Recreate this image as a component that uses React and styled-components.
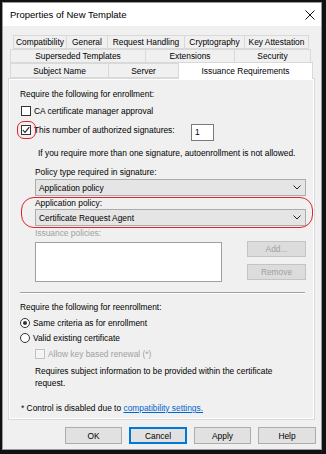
import React from 'react'
import styled, { createGlobalStyle } from 'styled-components'

const GlobalStyle = createGlobalStyle`
  html, body { margin: 0; padding: 0; background: #f0f0f0; }
  body {
    font-family: "Liberation Sans", Arial, sans-serif;
    font-size: 8.4px;
    color: #000;
  }
  * { box-sizing: border-box; }
`

const Window = styled.div`
  width: 326px;
  height: 454px;
  border-style: solid;
  border-color: #111;
  border-width: 2px 4px 4px 2px;
  display: flex;
  flex-direction: column;
`

const Frame = styled.div`
  flex: 1;
  border: 1px solid #9a9a9a;
  display: flex;
  flex-direction: column;
  background: #f0f0f0;
`

const TitleBar = styled.div`
  height: 23px;
  flex: 0 0 23px;
  background: #fff;
  display: flex;
  align-items: center;
  justify-content: space-between;
  padding: 0 6px 0 7px;
`

const Title = styled.span`
  font-size: 9.5px;
  color: #000;
`

const Body = styled.div`
  flex: 1;
  padding: 9px 6px 5px 5px;
  display: flex;
  flex-direction: column;
`

const TabRow = styled.div`
  display: flex;
  height: ${p => p.$h}px;
  margin-left: ${p => p.$ml}px;
  align-items: flex-start;
`

const Tab = styled.div`
  width: ${p => p.$w}px;
  height: ${p => (p.$active ? p.$h + 2 : p.$h)}px;
  margin-top: ${p => (p.$active ? -1 : 0)}px;
  margin-right: -1px;
  border: 1px solid #d9d9d9;
  border-bottom: ${p => (p.$active ? 'none' : '1px solid #d9d9d9')};
  background: ${p => (p.$active ? '#fff' : '#f0f0f0')};
  display: flex;
  align-items: center;
  justify-content: center;
  white-space: nowrap;
  position: relative;
  z-index: ${p => (p.$active ? 2 : 1)};
`

const Panel = styled.div`
  height: 342px;
  border: 1px solid #d9d9d9;
  box-shadow: inset 1px 1px 0 #fff, inset -1px -1px 0 #fff;
  padding: 0 8px 0 11px;
  display: flex;
  flex-direction: column;
`

const Line = styled.div`
  height: 12px;
  line-height: 12px;
  margin-top: ${p => p.$mt || 0}px;
  padding-left: ${p => p.$indent || 0}px;
  color: ${p => (p.$disabled ? '#a0a0a0' : '#000')};
  white-space: nowrap;
`

const Para = styled.div`
  line-height: 12px;
  margin-top: ${p => p.$mt || 0}px;
  padding-left: ${p => p.$indent || 0}px;
`

const CheckRow = styled.div`
  display: flex;
  align-items: center;
  height: 14px;
  margin-top: ${p => p.$mt || 0}px;
  padding-left: ${p => p.$indent || 0}px;
  color: ${p => (p.$disabled ? '#a0a0a0' : '#000')};
  white-space: nowrap;
`

const Box = styled.span`
  position: relative;
  width: 10px;
  height: 10px;
  margin: 0 3px 0 1px;
  border: 1px solid ${p => (p.$disabled ? '#c2c2c2' : '#333')};
  background: ${p => (p.$disabled ? '#f4f4f4' : '#fff')};
  display: flex;
  align-items: center;
  justify-content: center;
`

const RedRing = styled.span`
  position: absolute;
  left: -5px;
  top: -5px;
  width: 19px;
  height: 18px;
  border: 1.6px solid #e3202c;
  border-radius: 7px;
`

const Radio = styled.span`
  width: 10px;
  height: 10px;
  margin: 0 3px 0 0;
  border: 1px solid #333;
  border-radius: 50%;
  background: #fff;
  display: flex;
  align-items: center;
  justify-content: center;
  &::after {
    content: '';
    width: 4px;
    height: 4px;
    border-radius: 50%;
    background: ${p => (p.$on ? '#333' : 'transparent')};
  }
`

const SigRow = styled.div`
  display: flex;
  align-items: flex-start;
  height: 18px;
  margin-top: 5px;
`

const SigLabel = styled(CheckRow)`
  flex: 0 0 171px;
`

const NumberInput = styled.div`
  width: 23px;
  height: 17px;
  margin-top: 1px;
  border: 1px solid #7a7a7a;
  background: #fff;
  padding-left: 3px;
  line-height: 15px;
`

const Select = styled.div`
  height: 17px;
  margin-top: ${p => p.$mt || 0}px;
  margin-left: 15px;
  border: 1px solid #acacac;
  background: #e5e5e5;
  display: flex;
  align-items: center;
  justify-content: space-between;
  padding: 0 4px 0 3px;
`

const Highlight = styled.div`
  position: relative;
  margin-top: 1px;
`

const RedOutline = styled.span`
  position: absolute;
  left: 1px;
  right: -7px;
  top: 0;
  bottom: -2px;
  border: 1.4px solid #e3202c;
  border-radius: 13px;
  pointer-events: none;
`

const ListRow = styled.div`
  display: flex;
  justify-content: space-between;
  margin: 2px 0 0 15px;
  height: 41px;
`

const ListBox = styled.div`
  width: 187px;
  height: 40px;
  margin-top: 1px;
  border: 1px solid #a0a0a0;
  background: #fff;
`

const SideButtons = styled.div`
  display: flex;
  flex-direction: column;
  gap: 7px;
`

const Button = styled.div`
  width: ${p => p.$w || 57}px;
  height: ${p => p.$h || 17}px;
  display: flex;
  align-items: center;
  justify-content: center;
  background: ${p => (p.$disabled ? '#dcdcdc' : '#e1e1e1')};
  border: 1px solid ${p => (p.$disabled ? '#c4c4c4' : p.$focus ? '#0078d7' : '#adadad')};
  box-shadow: ${p => (p.$focus ? 'inset 0 0 0 1px #0078d7' : 'none')};
  color: ${p => (p.$disabled ? '#a0a0a0' : '#000')};
`

const Separator = styled.div`
  height: 2px;
  margin: 10px 1px 0 0;
  border-top: 1px solid #a0a0a0;
  border-bottom: 1px solid #fff;
`

const Link = styled.span`
  color: #0066cc;
  text-decoration: underline;
`

const ButtonRow = styled.div`
  display: flex;
  justify-content: flex-end;
  gap: 7px;
  margin: 7px -1px 0 0;
`

const Chevron = () => (
  <svg width="8" height="5" viewBox="0 0 8 5">
    <polyline points="0.5,0.5 4,4 7.5,0.5" fill="none" stroke="#222" strokeWidth="1" />
  </svg>
)

const Check = () => (
  <svg width="8" height="8" viewBox="0 0 8 8">
    <polyline points="0.8,4 3,6.4 7.3,1.2" fill="none" stroke="#222" strokeWidth="1.1" />
  </svg>
)

const CloseIcon = () => (
  <svg width="10" height="10" viewBox="0 0 10 10">
    <path d="M0.5 0.5 L9.5 9.5 M9.5 0.5 L0.5 9.5" stroke="#111" strokeWidth="1" />
  </svg>
)

const tabRows = [
  { ml: 5, h: 14, tabs: [['Compatibility', 54], ['General', 42], ['Request Handling', 78], ['Cryptography', 61], ['Key Attestation', 65]] },
  { ml: 2, h: 14, tabs: [['Superseded Templates', 136], ['Extensions', 90], ['Security', 77]] },
  { ml: 2, h: 15, tabs: [['Subject Name', 99], ['Server', 71], ['Issuance Requirements', 135, true]] },
]

export default function App() {
  return (
    <>
      <GlobalStyle />
      <Window>
        <Frame>
          <TitleBar>
            <Title>Properties of New Template</Title>
            <CloseIcon />
          </TitleBar>
          <Body>
            {tabRows.map((row, i) => (
              <TabRow key={i} $ml={row.ml} $h={row.h}>
                {row.tabs.map(([label, w, active]) => (
                  <Tab key={label} $w={w} $h={row.h} $active={active}>{label}</Tab>
                ))}
              </TabRow>
            ))}
            <Panel>
              <Line $mt={9}>Require the following for enrollment:</Line>
              <CheckRow $mt={4}>
                <Box />
                CA certificate manager approval
              </CheckRow>
              <SigRow>
                <SigLabel>
                  <Box>
                    <Check />
                    <RedRing />
                  </Box>
                  This number of authorized signatures:
                </SigLabel>
                <NumberInput>1</NumberInput>
              </SigRow>
              <Line $mt={6} $indent={18}>
                If you require more than one signature, autoenrollment is not allowed.
              </Line>
              <Line $mt={7} $indent={15}>Policy type required in signature:</Line>
              <Select $mt={1}>
                <span>Application policy</span>
                <Chevron />
              </Select>
              <Highlight>
                <Line $indent={15}>Application policy:</Line>
                <Select>
                  <span>Certificate Request Agent</span>
                  <Chevron />
                </Select>
                <RedOutline />
              </Highlight>
              <Line $mt={1} $indent={15} $disabled>Issuance policies:</Line>
              <ListRow>
                <ListBox />
                <SideButtons>
                  <Button $w={59} $h={16} $disabled>Add...</Button>
                  <Button $w={59} $h={16} $disabled>Remove</Button>
                </SideButtons>
              </ListRow>
              <Separator />
              <Line $mt={7}>Require the following for reenrollment:</Line>
              <CheckRow $mt={3}>
                <Radio $on />
                Same criteria as for enrollment
              </CheckRow>
              <CheckRow $mt={1}>
                <Radio />
                Valid existing certificate
              </CheckRow>
              <CheckRow $mt={2} $indent={14} $disabled>
                <Box $disabled />
                Allow key based renewal (*)
              </CheckRow>
              <Para $mt={4} $indent={15}>
                Requires subject information to be provided within the certificate
                <br />
                request.
              </Para>
              <Line $mt={13} $indent={1}>
                * Control is disabled due to <Link>compatibility settings.</Link>
              </Line>
            </Panel>
            <ButtonRow>
              <Button>OK</Button>
              <Button $w={58} $focus>Cancel</Button>
              <Button>Apply</Button>
              <Button $w={58}>Help</Button>
            </ButtonRow>
          </Body>
        </Frame>
      </Window>
    </>
  )
}
